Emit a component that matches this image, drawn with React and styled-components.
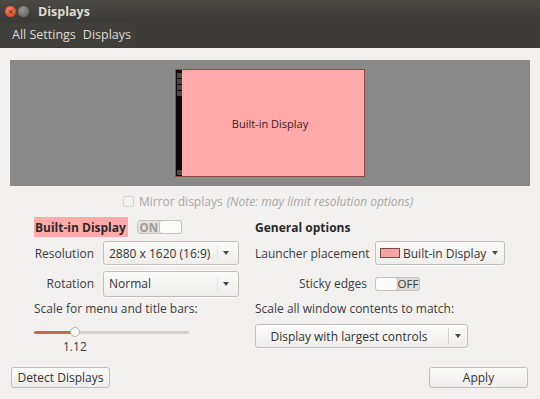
import React from 'react';
import styled, { createGlobalStyle } from 'styled-components';

const GlobalStyle = createGlobalStyle`
  html, body {
    margin: 0;
    padding: 0;
    background: #f2f1f0;
  }
  body {
    font-family: 'Open Sans', 'DejaVu Sans', sans-serif;
    font-size: 12px;
    color: #3c3c3c;
  }
`;

const Window = styled.div`
  width: 540px;
  height: 399px;
  display: flex;
  flex-direction: column;
  background: #f2f1f0;
  overflow: hidden;
`;

const Header = styled.div`
  height: 48px;
  background: linear-gradient(#4a4944, #3c3b37 40%, #3c3b37);
  display: flex;
  flex-direction: column;
  color: #dfdbd2;
`;

const TitleBar = styled.div`
  height: 22px;
  display: flex;
  align-items: center;
  padding-left: 5px;
`;

const WinButton = styled.span`
  width: 11px;
  height: 11px;
  border-radius: 50%;
  margin-right: 2px;
  display: flex;
  align-items: center;
  justify-content: center;
  font-size: 9px;
  line-height: 1;
  color: #3c2a22;
  background: ${(p) =>
    p.$close
      ? 'radial-gradient(circle at 40% 35%, #f4896a, #dc4a22 70%)'
      : 'radial-gradient(circle at 40% 35%, #95948f, #6e6d68 70%)'};
`;

const Title = styled.span`
  margin-left: 7px;
  font-weight: bold;
  font-size: 12.5px;
`;

const MenuBar = styled.div`
  height: 26px;
  display: flex;
  align-items: center;
`;

const MenuGroup = styled.div`
  display: flex;
  gap: 7px;
  padding: 3px 4px 4px 12px;
  background: rgba(255, 255, 255, 0.025);
  font-size: 12.5px;
`;

const Preview = styled.div`
  margin: 12px 10px 0;
  height: 126px;
  background: #898989;
  display: flex;
  justify-content: center;
  padding-top: 9px;
  box-sizing: border-box;
`;

const Monitor = styled.div`
  width: 190px;
  height: 108px;
  box-sizing: border-box;
  border: 1px solid #8a4c3e;
  background: #ffaaaa;
  display: flex;
`;

const Launcher = styled.div`
  width: 6px;
  background: #0c0a09;
  display: flex;
  flex-direction: column;
  align-items: center;
  padding: 3px 0 1px;
  gap: 1px;
`;

const LaunchIcon = styled.span`
  width: 5px;
  height: 5px;
  background: #4a4a48;
  margin-top: ${(p) => (p.$bottom ? 'auto' : '0')};
`;

const MonitorName = styled.div`
  flex: 1;
  display: flex;
  align-items: center;
  justify-content: center;
  color: #3b2020;
  font-size: 11px;
  padding-right: 6px;
`;

const MirrorRow = styled.div`
  display: flex;
  justify-content: center;
  align-items: center;
  height: 16px;
  margin-top: 7px;
  padding-right: 4px;
  color: #a9a7a3;
`;

const CheckBox = styled.span`
  width: 9px;
  height: 9px;
  border: 1px solid #d6d4d0;
  border-radius: 2px;
  background: #f4f3f2;
  margin-right: 5px;
`;

const Note = styled.i`
  margin-left: 4px;
`;

const Columns = styled.div`
  display: flex;
  padding-left: 34px;
  gap: 16px;
  margin-top: 8px;
`;

const Panel = styled.div`
  display: grid;
  grid-template-columns: ${(p) => p.$cols};
  column-gap: ${(p) => p.$gap};
  grid-template-rows: 20px 32px 29px 20px auto;
  align-items: center;
`;

const Heading = styled.div`
  grid-column: 1 / -1;
  display: flex;
  align-items: center;
  height: 20px;
  font-weight: bold;
  color: #2a2a2a;
`;

const Highlight = styled.span`
  background: #ffaaaa;
  height: 20px;
  display: flex;
  align-items: center;
  padding: 0 2px 0 1px;
  margin-right: 9px;
`;

const Label = styled.span`
  text-align: right;
  white-space: nowrap;
`;

const Combo = styled.div`
  height: ${(p) => p.$h || '24px'};
  box-sizing: border-box;
  border: 1px solid #c3c0bb;
  border-radius: 3px;
  background: linear-gradient(#fbfbfa, #efeeec);
  box-shadow: 0 1px 0 rgba(255, 255, 255, 0.6);
  display: ${(p) => (p.$inline ? 'inline-flex' : 'flex')};
  width: ${(p) => p.$w || 'auto'};
  margin-top: ${(p) => p.$mt || '0'};
  align-items: center;
  padding-left: ${(p) => p.$pl || '5px'};
  white-space: nowrap;
  color: #333;
`;

const ComboText = styled.span`
  flex: 1;
  text-align: ${(p) => p.$align || 'left'};
`;

const Sep = styled.span`
  width: 1px;
  height: 16px;
  background: ${(p) => (p.$faint ? '#e6e4e1' : '#d5d2cd')};
  margin-left: 6px;
`;

const Arrow = styled.span`
  width: 0;
  height: 0;
  border-left: 3.5px solid transparent;
  border-right: 3.5px solid transparent;
  border-top: 4px solid #4a4a4a;
  margin: 0 ${(p) => p.$mr || '9px'} 0 ${(p) => p.$ml || '6px'};
`;

const Swatch = styled.span`
  width: 18px;
  height: 8px;
  background: #f4a4a4;
  border: 1px solid #7a4a46;
  margin-right: 3px;
`;

const Switch = styled.div`
  width: 45px;
  height: 14px;
  box-sizing: border-box;
  border: 1px solid #c7c4bf;
  border-radius: 3px;
  background: ${(p) => (p.$on ? '#e2e0dc' : '#dedcd8')};
  display: flex;
  flex-direction: ${(p) => (p.$on ? 'row' : 'row-reverse')};
  align-items: stretch;
  font-size: 11.5px;
`;

const SwitchText = styled.span`
  flex: 1;
  display: flex;
  align-items: center;
  justify-content: center;
  color: ${(p) => (p.$on ? '#9e9c98' : '#3c3c3c')};
`;

const Knob = styled.span`
  width: 21px;
  background: #fbfbfa;
  border: 1px solid #c7c4bf;
  margin: -1px;
  border-radius: 3px;
`;

const Wide = styled.div`
  grid-column: 1 / -1;
  white-space: nowrap;
  align-self: ${(p) => (p.$top ? 'start' : 'center')};
`;

const SliderBox = styled.div`
  grid-column: 1 / -1;
  align-self: start;
  width: 155px;
  display: flex;
  flex-direction: column;
  margin-top: 6px;
`;

const Track = styled.div`
  height: 16px;
  display: flex;
  align-items: center;
`;

const Fill = styled.span`
  height: 3px;
  border-radius: 2px 0 0 2px;
  background: #c4694a;
`;

const Rest = styled.span`
  height: 3px;
  flex: 1;
  border-radius: 0 2px 2px 0;
  background: #d3d0cb;
`;

const Thumb = styled.span`
  width: 8px;
  height: 8px;
  border-radius: 50%;
  background: #fbfbfa;
  border: 1px solid #b5b2ad;
  margin: 0 -1px 0 -4px;
  position: relative;
`;

const SliderValue = styled.span`
  margin-left: 29px;
  line-height: 14px;
`;

const Footer = styled.div`
  margin-top: auto;
  display: flex;
  justify-content: space-between;
  padding: 0 12px 11px 11px;
`;

const Button = styled.button`
  width: 99px;
  height: 21px;
  border: 1px solid #c3c0bb;
  border-radius: 3px;
  background: linear-gradient(#fbfbfa, #eeedeb);
  font: inherit;
  color: #333;
  padding: 0;
`;

const Slider = ({ value, pct }) => (
  <SliderBox>
    <Track>
      <Fill style={{ width: `${pct}%` }} />
      <Thumb />
      <Rest />
    </Track>
    <SliderValue>{value}</SliderValue>
  </SliderBox>
);

const App = () => (
  <Window>
    <GlobalStyle />
    <Header>
      <TitleBar>
        <WinButton $close>×</WinButton>
        <WinButton />
        <Title>Displays</Title>
      </TitleBar>
      <MenuBar>
        <MenuGroup>
          <span>All Settings</span>
          <span>Displays</span>
        </MenuGroup>
      </MenuBar>
    </Header>

    <Preview>
      <Monitor>
        <Launcher>
          <LaunchIcon />
          <LaunchIcon />
          <LaunchIcon />
          <LaunchIcon />
          <LaunchIcon $bottom />
        </Launcher>
        <MonitorName>Built-in Display</MonitorName>
      </Monitor>
    </Preview>

    <MirrorRow>
      <CheckBox />
      Mirror displays
      <Note>(Note: may limit resolution options)</Note>
    </MirrorRow>

    <Columns>
      <Panel $cols="60px 136px" $gap="9px">
        <Heading>
          <Highlight>Built-in Display</Highlight>
          <Switch $on>
            <SwitchText $on>ON</SwitchText>
            <Knob />
          </Switch>
        </Heading>
        <Label>Resolution</Label>
        <Combo>
          <ComboText>2880 x 1620 (16:9)</ComboText>
          <Sep $faint />
          <Arrow $ml="5px" />
        </Combo>
        <Label>Rotation</Label>
        <Combo $h="26px">
          <ComboText>Normal</ComboText>
          <Sep $faint />
          <Arrow $ml="5px" />
        </Combo>
        <Wide>Scale for menu and title bars:</Wide>
        <Slider value="1.12" pct={26} />
      </Panel>

      <Panel $cols="112px auto" $gap="8px">
        <Heading>General options</Heading>
        <Label>Launcher placement</Label>
        <div>
          <Combo $inline $pl="4px">
            <Swatch />
            <ComboText>Built-in Display</ComboText>
            <Arrow $ml="6px" $mr="6px" />
          </Combo>
        </div>
        <Label>Sticky edges</Label>
        <div>
          <Switch>
            <SwitchText>OFF</SwitchText>
            <Knob />
          </Switch>
        </div>
        <Wide>Scale all window contents to match:</Wide>
        <Wide $top>
          <Combo $w="213px" $mt="6px" $pl="0">
            <ComboText $align="center">Display with largest controls</ComboText>
            <Sep />
            <Arrow $mr="6px" />
          </Combo>
        </Wide>
      </Panel>
    </Columns>

    <Footer>
      <Button>Detect Displays</Button>
      <Button>Apply</Button>
    </Footer>
  </Window>
);

export default App;
